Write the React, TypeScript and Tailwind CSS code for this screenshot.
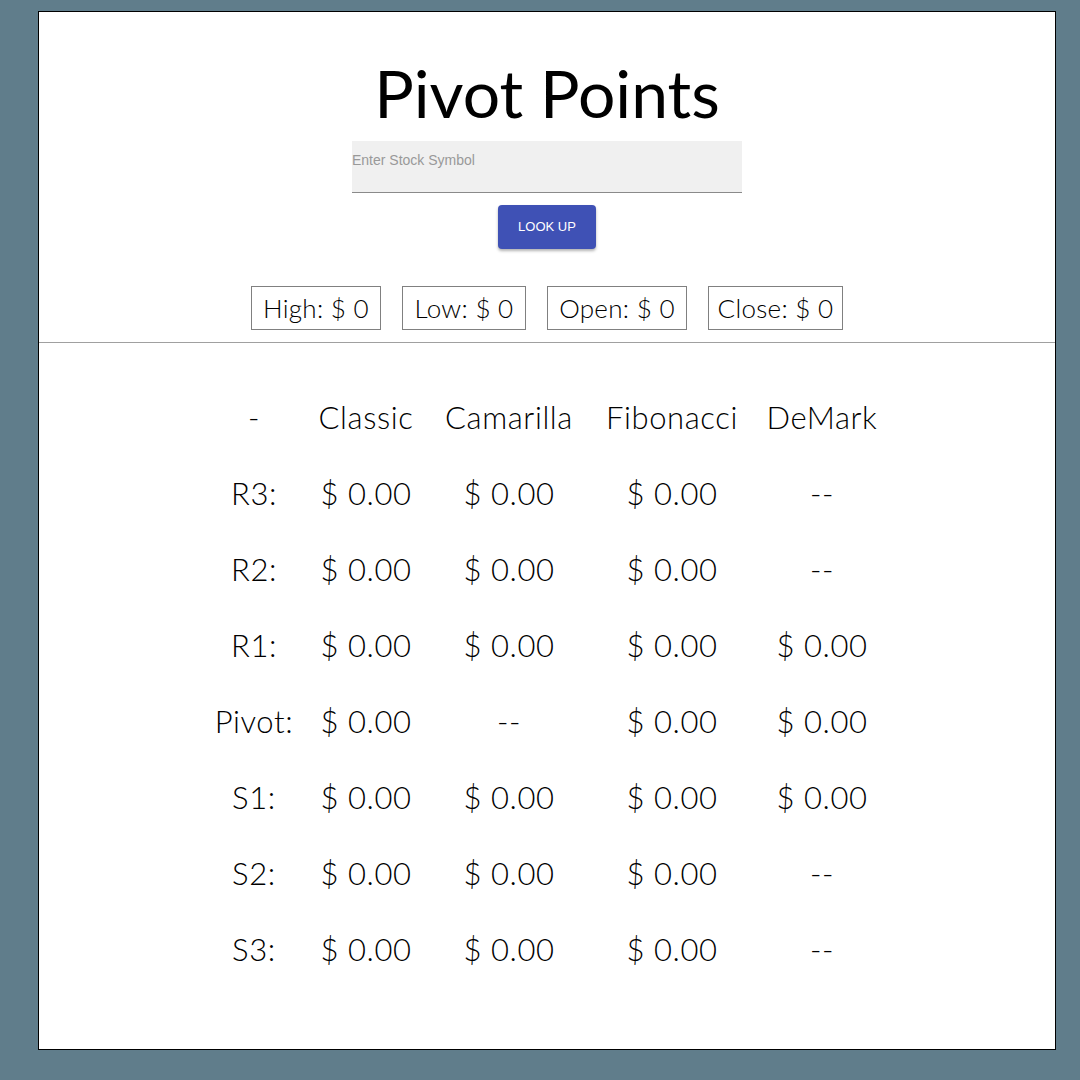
import React from 'react';

const rows = [
  { label: 'R3:', values: ['$ 0.00', '$ 0.00', '$ 0.00', '--'] },
  { label: 'R2:', values: ['$ 0.00', '$ 0.00', '$ 0.00', '--'] },
  { label: 'R1:', values: ['$ 0.00', '$ 0.00', '$ 0.00', '$ 0.00'] },
  { label: 'Pivot:', values: ['$ 0.00', '--', '$ 0.00', '$ 0.00'] },
  { label: 'S1:', values: ['$ 0.00', '$ 0.00', '$ 0.00', '$ 0.00'] },
  { label: 'S2:', values: ['$ 0.00', '$ 0.00', '$ 0.00', '--'] },
  { label: 'S3:', values: ['$ 0.00', '$ 0.00', '$ 0.00', '--'] },
];

const quotes = [
  { label: 'High', w: 'w-[130px]' },
  { label: 'Low', w: 'w-[124px]' },
  { label: 'Open', w: 'w-[140px]' },
  { label: 'Close', w: 'w-[135px]' },
];

const gridCols = 'grid grid-cols-[100px_124px_162px_164px_136px]';

export default function App() {
  return (
    <div className="min-h-[1080px] w-[1080px] bg-[#607d8b] pt-[11px] pl-[38px] font-['Lato',sans-serif] text-black">
      <div className="flex h-[1039px] w-[1018px] flex-col items-center border border-black bg-white">
        <h1 className="mt-[42px] text-[66px] leading-[78px] font-normal">Pivot Points</h1>

        <div className="mt-[9px] h-[52px] w-[390px] border-b border-[#8a8a8a] bg-[#f0f0f0] pt-[9px] text-left font-['Liberation_Sans',sans-serif] text-[14px] text-[#999]">
          Enter Stock Symbol
        </div>

        <button className="mt-[12px] h-[44px] w-[98px] rounded-[4px] bg-[#3f51b5] font-['Liberation_Sans',sans-serif] text-[13px] text-white shadow-[0_2px_3px_rgba(0,0,0,0.3)]">
          LOOK UP
        </button>

        <div className="mt-[37px] flex gap-[21px]">
          {quotes.map((q) => (
            <div
              key={q.label}
              className={`flex h-[44px] items-center justify-center border border-[#808080] text-[26px] font-light tracking-[0.3px] ${q.w}`}
            >
              {q.label}: $ 0
            </div>
          ))}
        </div>

        <div className="mt-[12px] h-px w-full bg-[#a0a0a0]" />

        <div className="mt-[36px] flex flex-col text-[31px] font-light tracking-[0.6px]">
          <div className={`${gridCols} h-[76px] items-center text-center`}>
            <div>-</div>
            <div>Classic</div>
            <div>Camarilla</div>
            <div>Fibonacci</div>
            <div>DeMark</div>
          </div>
          {rows.map((r) => (
            <div key={r.label} className={`${gridCols} h-[76px] items-center text-center`}>
              <div>{r.label}</div>
              {r.values.map((v, i) => (
                <div key={i}>{v}</div>
              ))}
            </div>
          ))}
        </div>
      </div>
    </div>
  );
}
